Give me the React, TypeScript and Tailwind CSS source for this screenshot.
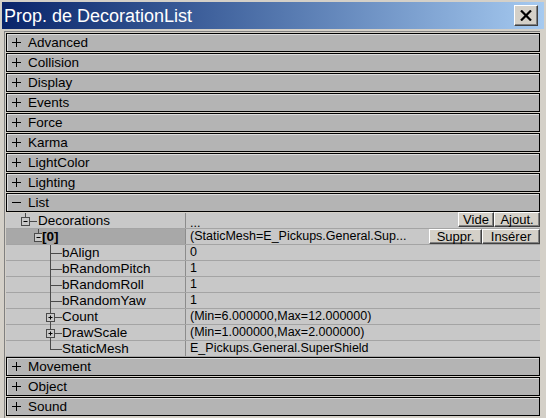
import React from "react";

/* ── Property tree data ── */
const BEFORE = ["Advanced", "Collision", "Display", "Events", "Force", "Karma", "LightColor", "Lighting"];
const AFTER = ["Movement", "Object", "Sound"];

type Kind = "leaf" | "plus" | "last";
const CHILDREN: { name: string; value: string; kind: Kind }[] = [
  { name: "bAlign", value: "0", kind: "leaf" },
  { name: "bRandomPitch", value: "1", kind: "leaf" },
  { name: "bRandomRoll", value: "1", kind: "leaf" },
  { name: "bRandomYaw", value: "1", kind: "leaf" },
  { name: "Count", value: "(Min=6.000000,Max=12.000000)", kind: "plus" },
  { name: "DrawScale", value: "(Min=1.000000,Max=2.000000)", kind: "plus" },
  { name: "StaticMesh", value: "E_Pickups.General.SuperShield", kind: "last" },
];

const LINE = "#4a4a4a";

function Sign({ open }: { open?: boolean }) {
  return (
    <svg width="9" height="9" className="shrink-0">
      <line x1="0" y1="4.5" x2="9" y2="4.5" stroke="#000" strokeWidth="1" />
      {!open && <line x1="4.5" y1="0" x2="4.5" y2="9" stroke="#000" strokeWidth="1" />}
    </svg>
  );
}

function Category({ label, open }: { label: string; open?: boolean }) {
  return (
    <div className="h-[20px] pb-[1px]">
      <div className="h-[19px] border border-black bg-[#b4b4b4] shadow-[inset_1px_1px_0_#dcdcdc] flex items-center pl-[5px] gap-[7px] text-[13.5px] text-black">
        <Sign open={open} />
        <span className="leading-none pt-[1px]">{label}</span>
      </div>
    </div>
  );
}

function Box({ x, open }: { x: number; open?: boolean }) {
  return (
    <g>
      <rect x={x - 3.5} y={4.5} width="8" height="8" fill="#c8c8c8" stroke={LINE} strokeWidth="1" />
      <line x1={x - 1.5} y1="8.5" x2={x + 2.5} y2="8.5" stroke="#000" />
      {!open && <line x1={x + 0.5} y1="6.5" x2={x + 0.5} y2="10.5" stroke="#000" />}
    </g>
  );
}

function Btn({ label, w }: { label: string; w: string }) {
  return (
    <div
      className={`${w} h-[15px] bg-[#d4d0c8] border border-t-white border-l-white border-b-[#404040] border-r-[#404040] shadow-[inset_-1px_-1px_0_#808080] flex items-center justify-center text-[13px] leading-none text-black`}
    >
      {label}
    </div>
  );
}

function Row({
  tree,
  label,
  value,
  selected,
  bold,
  buttons,
}: {
  tree: React.ReactNode;
  label: string;
  value: React.ReactNode;
  selected?: boolean;
  bold?: boolean;
  buttons?: React.ReactNode;
}) {
  return (
    <div className="h-[16px] flex border-b border-[#a4a4a4]">
      <div
        className={`w-[180px] shrink-0 flex items-center border-r border-[#8c8c8c] ${
          selected ? "bg-[#a8a8a8]" : "bg-[#c8c8c8]"
        }`}
      >
        {tree}
        <span className={`text-[13.5px] leading-none text-black ${bold ? "font-bold" : ""}`}>{label}</span>
      </div>
      <div className="flex-1 flex items-center bg-[#c8c8c8] pl-[4px] min-w-0">
        <span className="text-[12.5px] leading-none text-black flex-1 whitespace-nowrap">{value}</span>
        {buttons}
      </div>
    </div>
  );
}

export default function App() {
  return (
    <div
      className="w-[546px] h-[418px] overflow-hidden bg-[#d4d0c8] flex flex-col"
      style={{ fontFamily: '"Liberation Sans", Arial, sans-serif' }}
    >
      {/* Title bar */}
      <div className="mt-[2px] mx-[2px] h-[27px] shrink-0 flex items-center justify-between bg-gradient-to-r from-[#0a246a] to-[#a6caf0]">
        <span className="pl-[2px] text-white text-[18px] leading-none">Prop. de DecorationList</span>
        <div className="mr-[6px] w-[24px] h-[21px] bg-[#d4d0c8] border border-t-white border-l-white border-b-[#404040] border-r-[#404040] shadow-[inset_-1px_-1px_0_#808080] flex items-center justify-center">
          <svg width="12" height="11" viewBox="0 0 12 11">
            <path d="M1 0.5 L11 10.5 M11 0.5 L1 10.5" stroke="#000" strokeWidth="2.2" />
          </svg>
        </div>
      </div>

      {/* Property panel */}
      <div className="mt-[2px] ml-[4px] mr-[6px] flex-1 border-l border-t border-[#808080] pl-[1px] pt-[1px] min-h-0">
        {BEFORE.map((c) => (
          <Category key={c} label={c} />
        ))}
        <Category label="List" open />

        <Row
          tree={
            <svg width="32" height="16" className="shrink-0">
              <line x1="19.5" y1="0" x2="19.5" y2="4.5" stroke={LINE} />
              <Box x={19} open />
              <line x1="24" y1="8.5" x2="31" y2="8.5" stroke={LINE} />
            </svg>
          }
          label="Decorations"
          value={<span className="relative top-[3px]">...</span>}
          buttons={
            <div className="flex self-start mt-[-1px]">
              <Btn label="Vide" w="w-[36px]" />
              <Btn label="Ajout." w="w-[46px]" />
            </div>
          }
        />
        <Row
          selected
          bold
          tree={
            <svg width="36" height="16" className="shrink-0">
              <line x1="32.5" y1="0" x2="32.5" y2="4.5" stroke={LINE} />
              <Box x={32} open />
            </svg>
          }
          label="[0]"
          value="(StaticMesh=E_Pickups.General.Sup..."
          buttons={
            <div className="flex">
              <Btn label="Suppr." w="w-[53px]" />
              <Btn label="Insérer" w="w-[58px]" />
            </div>
          }
        />
        {CHILDREN.map((c) => (
          <Row
            key={c.name}
            tree={
              <svg width="56" height="16" className="shrink-0">
                {c.kind === "plus" ? (
                  <>
                    <line x1="44.5" y1="0" x2="44.5" y2="4.5" stroke={LINE} />
                    <line x1="44.5" y1="12.5" x2="44.5" y2="16" stroke={LINE} />
                    <Box x={44} />
                    <line x1="49" y1="8.5" x2="56" y2="8.5" stroke={LINE} />
                  </>
                ) : (
                  <>
                    <line x1="44.5" y1="0" x2="44.5" y2={c.kind === "last" ? 9 : 16} stroke={LINE} />
                    <line x1="44.5" y1="8.5" x2="56" y2="8.5" stroke={LINE} />
                  </>
                )}
              </svg>
            }
            label={c.name}
            value={c.value}
          />
        ))}

        {AFTER.map((c) => (
          <Category key={c} label={c} />
        ))}
      </div>
    </div>
  );
}
